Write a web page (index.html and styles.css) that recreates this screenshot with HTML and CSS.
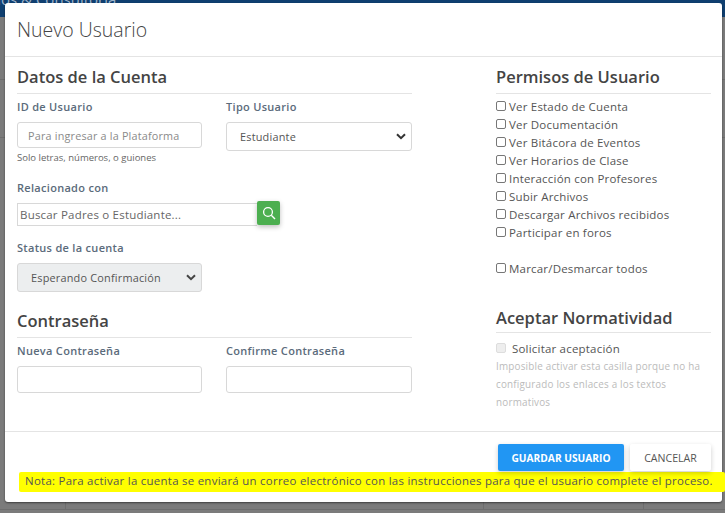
FILE: index.html
```html
<!DOCTYPE html>
<html lang="es">
<head>
  <meta charset="UTF-8">
  <title>Nuevo Usuario</title>
  <link rel="stylesheet" href="styles.css">
</head>
<body>
  <div class="navbar"><span class="navbar-text">Servicios &amp; Consultoria</span></div>
  <div class="backdrop-lines"></div>

  <div class="modal">
    <div class="modal-header">
      <h2>Nuevo Usuario</h2>
    </div>

    <div class="modal-body">
      <div class="col-left">
        <h3>Datos de la Cuenta</h3>
        <div class="form-row row-id">
          <div class="form-group">
            <label>ID de Usuario</label>
            <input type="text" class="input input-id" placeholder="Para ingresar a la Plataforma">
            <small>Solo letras, números, o guiones</small>
          </div>
          <div class="form-group">
            <label>Tipo Usuario</label>
            <div class="select">
              <span>Estudiante</span>
              <svg viewBox="0 0 10 7" width="10" height="7"><path d="M1 1.2 5 5.2 9 1.2" fill="none" stroke="#333" stroke-width="2"/></svg>
            </div>
          </div>
        </div>

        <div class="form-group group-related">
          <label>Relacionado con</label>
          <div class="search">
            <input type="text" class="search-input" placeholder="Buscar Padres o Estudiante...">
            <button class="search-btn" type="button">
              <svg viewBox="0 0 14 14" width="14" height="14"><circle cx="6" cy="6" r="4.4" fill="none" stroke="#fff" stroke-width="1.3"/><path d="M9.3 9.3 13 13" stroke="#fff" stroke-width="1.4"/></svg>
            </button>
          </div>
        </div>

        <div class="form-group group-status">
          <label>Status de la cuenta</label>
          <div class="select select-disabled">
            <span>Esperando Confirmación</span>
            <svg viewBox="0 0 10 7" width="10" height="7"><path d="M1 1.2 5 5.2 9 1.2" fill="none" stroke="#444" stroke-width="2"/></svg>
          </div>
        </div>

        <h3 class="title-pass">Contraseña</h3>
        <div class="form-row">
          <div class="form-group">
            <label>Nueva Contraseña</label>
            <input type="password" class="input input-pass">
          </div>
          <div class="form-group">
            <label>Confirme Contraseña</label>
            <input type="password" class="input input-pass">
          </div>
        </div>
      </div>

      <div class="col-right">
        <h3>Permisos de Usuario</h3>
        <ul class="checks">
          <li><input type="checkbox">Ver Estado de Cuenta</li>
          <li><input type="checkbox">Ver Documentación</li>
          <li><input type="checkbox">Ver Bitácora de Eventos</li>
          <li><input type="checkbox">Ver Horarios de Clase</li>
          <li><input type="checkbox">Interacción con Profesores</li>
          <li><input type="checkbox">Subir Archivos</li>
          <li><input type="checkbox">Descargar Archivos recibidos</li>
          <li><input type="checkbox">Participar en foros</li>
          <li class="check-all"><input type="checkbox">Marcar/Desmarcar todos</li>
        </ul>

        <h3 class="title-norm">Aceptar Normatividad</h3>
        <div class="accept"><span class="fake-check"></span>Solicitar aceptación</div>
        <p class="accept-note">Imposible activar esta casilla porque no ha configurado los enlaces a los textos normativos</p>
      </div>
    </div>

    <div class="modal-footer">
      <div class="buttons">
        <button class="btn btn-save" type="button">Guardar Usuario</button>
        <button class="btn btn-cancel" type="button">Cancelar</button>
      </div>
      <p class="note"><span>Nota: Para activar la cuenta se enviará un correo electrónico con las instrucciones para que el usuario complete el proceso.</span></p>
    </div>
  </div>
</body>
</html>
```

FILE: styles.css
```css
* {
  box-sizing: border-box;
  margin: 0;
  padding: 0;
}

html, body {
  width: 725px;
  height: 513px;
  overflow: hidden;
}

body {
  position: relative;
  background-color: #7b7b7b;
  font-family: 'Open Sans', 'Liberation Sans', sans-serif;
  color: #555;
}

.navbar {
  height: 17px;
  background-color: #0f3f70;
  overflow: hidden;
}

.navbar-text {
  display: block;
  margin-top: -11px;
  margin-left: -44px;
  font-size: 15px;
  line-height: 20px;
  color: #9fb4ca;
}

.backdrop-lines {
  height: 496px;
  background:
    linear-gradient(#6e6e6e, #6e6e6e) 0 62px / 100% 1px no-repeat,
    linear-gradient(#6e6e6e, #6e6e6e) 0 120px / 100% 1px no-repeat,
    linear-gradient(#6e6e6e, #6e6e6e) 0 492px / 100% 1px no-repeat,
    linear-gradient(#6e6e6e, #6e6e6e) 65px 485px / 1px 8px no-repeat,
    linear-gradient(#6e6e6e, #6e6e6e) 483px 485px / 1px 8px no-repeat,
    linear-gradient(#6e6e6e, #6e6e6e) 643px 485px / 1px 8px no-repeat;
}

/* modal sits over the page */
.modal {
  position: absolute;
  left: 5px;
  top: 3px;
  width: 717px;
  height: 499px;
  background-color: #fff;
  border-radius: 3px;
  box-shadow: 0 1px 2px rgba(0, 0, 0, 0.5);
}

.modal-header {
  height: 54px;
  padding: 14px 12px 0;
  border-bottom: 1px solid #e4e4e4;
}

.modal-header h2 {
  font-size: 19.5px;
  font-weight: 300;
  line-height: 25px;
  color: #444;
}

.modal-body {
  display: flex;
  height: 375px;
  padding: 0 11px 0 12px;
  border-bottom: 1px solid #e4e4e4;
}

.col-left {
  width: 395px;
  margin-right: 84px;
  padding-top: 10px;
}

.col-right {
  width: 215px;
  padding-top: 10px;
}

h3 {
  height: 27px;
  font-size: 16.5px;
  font-weight: 600;
  line-height: 20px;
  color: #444;
  border-bottom: 1px solid #e4e4e4;
}

.form-row {
  display: flex;
  gap: 24px;
}

.form-row .form-group {
  width: 185.5px;
}

.form-row .form-group:first-child {
  width: 185px;
}

.form-group label {
  display: block;
  height: 20px;
  padding-top: 5px;
  margin-bottom: 8px;
  font-size: 11px;
  font-weight: 600;
  line-height: 15px;
  letter-spacing: 0.3px;
  color: #5b6b7b;
}

.input {
  display: block;
  width: 100%;
  height: 26px;
  padding: 0 10px;
  background-color: #fff;
  border: 1px solid #d8d8d8;
  border-radius: 3px;
  font-family: inherit;
  font-size: 10.8px;
  letter-spacing: 0.2px;
}

.input::placeholder {
  color: #8a8a8a;
  opacity: 1;
}

.input-pass {
  height: 27px;
}

small {
  display: block;
  margin-top: 3px;
  font-size: 9.5px;
  line-height: 13px;
  color: #666;
}

.select {
  display: flex;
  align-items: center;
  justify-content: space-between;
  height: 29px;
  padding: 0 5px 0 13px;
  border: 1px solid #d8d8d8;
  border-radius: 3px;
  font-size: 10.9px;
  letter-spacing: 0.2px;
  color: #555;
}

.select-disabled {
  background-color: #eceeef;
}

.group-related {
  margin-top: 11px;
}

.search {
  display: flex;
  align-items: flex-start;
  margin-top: -2px;
}

.search-input {
  width: 240px;
  height: 23px;
  margin-top: 2px;
  padding: 0 2px;
  border: 1px solid #d8d8d8;
  border-right: none;
  font-family: inherit;
  font-size: 11.5px;
  letter-spacing: 0.2px;
}

.search-input::placeholder {
  color: #666;
  opacity: 1;
}

.search-btn {
  display: flex;
  align-items: center;
  justify-content: center;
  width: 23px;
  height: 24px;
  background-color: #4caf50;
  border: none;
  border-radius: 2px;
  box-shadow: 0 2px 5px rgba(0, 0, 0, 0.25);
}

.group-status {
  width: 185px;
  margin-top: 9px;
}

.title-pass {
  margin-top: 19px;
}

.checks {
  list-style: none;
  margin-top: 3px;
}

.checks li {
  display: flex;
  align-items: center;
  height: 18px;
  font-size: 11.5px;
  letter-spacing: 0.2px;
  color: #555;
}

.checks input {
  width: 10px;
  height: 10px;
  margin-right: 3px;
  appearance: none;
  border: 1px solid #777;
  border-radius: 2px;
  background-color: #fff;
}

.check-all {
  margin-top: 18px;
}

.title-norm {
  height: 25px;
  margin-top: 31px;
}

.accept {
  display: flex;
  align-items: center;
  height: 18px;
  margin-top: 6px;
  font-size: 11.5px;
  letter-spacing: 0.2px;
  color: #555;
}

.fake-check {
  width: 10px;
  height: 10px;
  margin-right: 6px;
  background-color: #eee;
  border: 1px solid #ddd;
  border-radius: 2px;
}

.accept-note {
  font-size: 9.9px;
  line-height: 18px;
  letter-spacing: 0.2px;
  color: #bbb;
}

.buttons {
  display: flex;
  justify-content: flex-end;
  gap: 6px;
  padding: 12px 11px 0 0;
}

.btn {
  height: 27px;
  border: none;
  border-radius: 2px;
  font-family: inherit;
  font-size: 10.2px;
  text-transform: uppercase;
  box-shadow: 0 2px 5px rgba(0, 0, 0, 0.2);
}

.btn-save {
  width: 126px;
  font-weight: 700;
  color: #fff;
  background-color: #2196f3;
}

.btn-cancel {
  width: 81px;
  color: #555;
  background-color: #fff;
  font-size: 10.6px;
}

.note {
  height: 20px;
  margin: 1px -3px 0 14px;
  padding-left: 6px;
  background-color: #ffff00;
  border-radius: 2px;
  font-size: 11.45px;
  line-height: 18px;
  letter-spacing: 0.27px;
  white-space: nowrap;
  color: #555;
}
```
